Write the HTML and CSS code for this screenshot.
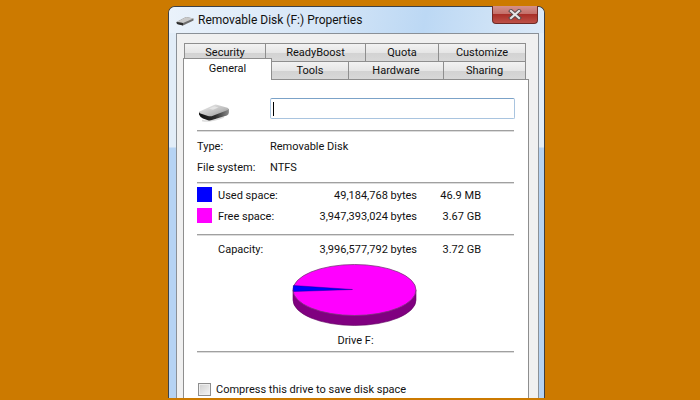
FILE: index.html
```html
<!DOCTYPE html>
<html>
<head>
  <title>Removable Disk (F:) Properties</title>
  <link rel="stylesheet" href="styles.css">
</head>
<body>
  <div class="window">
    <div class="titlebar">
      <svg class="title-icon" width="18" height="10" viewBox="0 0 18 10">
        <path d="M0.5 6 L10 1 L17.5 2.5 L17.5 4.5 L7 9.5 L1 8 Z" fill="#6e6e6e"/>
        <path d="M0.5 6 L10 1 L17.5 2.5 L7 7 Z" fill="#c9c9c9"/>
        <path d="M0.5 6 L7 7 L7 9.5 L1 8 Z" fill="#2c2c2c"/>
      </svg>
      <span class="title-text">Removable Disk (F:) Properties</span>
      <div class="close-btn">
        <svg width="14" height="11" viewBox="0 0 14 11">
          <path d="M3 2 L11 9 M11 2 L3 9" stroke="#5a4a4a" stroke-width="4" stroke-linecap="square"/>
          <path d="M3 2 L11 9 M11 2 L3 9" stroke="#e6e6e6" stroke-width="2.2" stroke-linecap="square"/>
        </svg>
      </div>
    </div>
    <div class="client">
      <div class="tabs">
        <div class="tab-row back">
          <div class="tab w-security">Security</div>
          <div class="tab w-ready">ReadyBoost</div>
          <div class="tab w-quota">Quota</div>
          <div class="tab w-custom">Customize</div>
        </div>
        <div class="tab-row front">
          <div class="tab selected">General</div>
          <div class="tab w-tools">Tools</div>
          <div class="tab w-hardware">Hardware</div>
          <div class="tab w-sharing">Sharing</div>
        </div>
      </div>
      <div class="panel">
        <div class="name-row">
          <svg class="drive-icon" width="32" height="20" viewBox="0 0 32 20">
            <defs>
              <linearGradient id="driveTop" x1="0" y1="0" x2="1" y2="1">
                <stop offset="0" stop-color="#f2f2f2"/>
                <stop offset="0.6" stop-color="#bdbdbd"/>
                <stop offset="1" stop-color="#8c8c8c"/>
              </linearGradient>
              <linearGradient id="driveFront" x1="0" y1="0" x2="1" y2="0">
                <stop offset="0" stop-color="#111"/>
                <stop offset="0.55" stop-color="#2e2e2e"/>
                <stop offset="1" stop-color="#8a8a8a"/>
              </linearGradient>
            </defs>
            <path d="M5 18.5 Q13 20.5 27 15" stroke="#dcdcdc" stroke-width="1.5" fill="none"/>
            <path d="M2 10 L2 12.5 Q3 15 6 16.5 L11 18.2 Q13 18.8 15 18 L30 13.5 Q32 12.5 32 10.5 L32 7 Z" fill="url(#driveFront)"/>
            <path d="M2.5 9.5 L17 3 Q18.5 2.3 20 2.8 L30.5 5.8 Q32.5 6.8 31 8 L16 13.8 Q13.5 14.8 11 14 L3.5 11.5 Q1.5 10.5 2.5 9.5 Z" fill="url(#driveTop)"/>
            <path d="M12 6.5 L17.5 4.3 L21.5 5.5 L16 7.8 Z" fill="#e4e4e4"/>
          </svg>
          <div class="name-input"><span class="caret"></span></div>
        </div>
        <div class="divider d1"></div>
        <div class="info-row r1"><span class="info-label">Type:</span><span>Removable Disk</span></div>
        <div class="info-row r2"><span class="info-label">File system:</span><span>NTFS</span></div>
        <div class="divider d2"></div>
        <div class="space-row">
          <span class="swatch used"></span><span>Used space:</span>
          <span class="num">49,184,768 bytes</span><span class="num">46.9 MB</span>
        </div>
        <div class="space-row">
          <span class="swatch free"></span><span>Free space:</span>
          <span class="num">3,947,393,024 bytes</span><span class="num">3.67 GB</span>
        </div>
        <div class="divider d3"></div>
        <div class="space-row s3">
          <span></span><span>Capacity:</span>
          <span class="num">3,996,577,792 bytes</span><span class="num">3.72 GB</span>
        </div>
        <svg class="pie" width="125" height="63" viewBox="0 0 125 63">
          <path d="M1 26 L1 36 A61.5 25.5 0 0 0 124 36 L124 26 Z" fill="#800080" stroke="#5e005e" stroke-width="0.6"/>
          <ellipse cx="62.5" cy="26" rx="61.5" ry="25.5" fill="#ff00ff" stroke="#7a3a7a" stroke-width="0.8"/>
          <path d="M60.5 25.5 L1.4 21.5 Q0.8 25 1.6 27.5 Z" fill="#0000ff" stroke="#000080" stroke-width="0.4"/>
        </svg>
        <div class="drive-label">Drive F:</div>
        <div class="divider d4"></div>
        <label class="compress"><span class="checkbox"></span>Compress this drive to save disk space</label>
      </div>
    </div>
  </div>
</body>
</html>
```

FILE: styles.css
```css
html, body {
  height: 100%;
}

body {
  margin: 0;
  background-color: #cc7a00;
  display: flex;
  align-items: flex-start;
  overflow: hidden;
  font-family: Roboto, sans-serif;
  font-size: 11px;
  color: #111;
}

.window {
  width: 377px;
  height: 392px;
  margin: 6px 0 0 168px;
  box-sizing: border-box;
  border: 1px solid #3c4148;
  border-bottom: 0;
  border-radius: 7px 7px 0 0;
  background: linear-gradient(to bottom, #e2edf8 0, #e2edf8 140px, #b6d3f3 141px);
  padding: 0 5px 0 7px;
  display: flex;
  flex-direction: column;
}

.titlebar {
  height: 26px;
  margin: 0 -5px 0 -7px;
  padding-left: 7px;
  box-sizing: border-box;
  border-radius: 6px 6px 0 0;
  background: linear-gradient(100deg, #eaf2fb 0%, #d6e6f7 40%, #bcd8f4 68%, #dceaf8 100%);
  display: flex;
  align-items: center;
  position: relative;
}

.title-icon {
  margin: 2px 4px 0 0;
}

.title-text {
  font-size: 12px;
  color: #111;
}

.close-btn {
  position: absolute;
  top: -1px;
  right: 6px;
  width: 46px;
  height: 18px;
  box-sizing: border-box;
  border: 1px solid #6e2a26;
  border-top: 0;
  border-radius: 0 0 4px 4px;
  background: linear-gradient(to bottom, #d4918a 0, #c4706a 45%, #a92f28 50%, #bd5148 100%);
  display: flex;
  justify-content: center;
  align-items: center;
}

.client {
  flex: 1;
  border: 1px solid #8a9097;
  border-bottom: 0;
  background-color: #f0f0f0;
  padding: 9px 10px 0 6px;
  display: flex;
  flex-direction: column;
}

.tab-row {
  display: flex;
  height: 18px;
}

.tab {
  box-sizing: border-box;
  height: 18px;
  line-height: 17px;
  border: 1px solid #8e8e8e;
  border-bottom: 0;
  margin-right: -1px;
  background: linear-gradient(to bottom, #f2f2f2 0, #e6e6e6 50%, #d2d2d2 51%, #d8d8d8 100%);
  text-align: center;
}

.back {
  margin-left: 1px;
}

.w-security { width: 82px; }
.w-ready { width: 101px; }
.w-quota { width: 74px; }
.w-custom { width: 88px; }
.w-tools { width: 78px; }
.w-hardware { width: 96px; }
.w-sharing { width: 83px; }

.front .selected {
  width: 89px;
  height: 22px;
  margin-top: -3px;
  line-height: 19px;
  background: #fff;
  position: relative;
  z-index: 1;
}

.panel {
  flex: 1;
  box-sizing: border-box;
  width: 346px;
  border: 1px solid #8e8e8e;
  border-bottom: 0;
  background-color: #fff;
  padding: 18px 13px 0 13px;
  display: flex;
  flex-direction: column;
}

.name-row {
  display: flex;
  align-items: center;
  height: 21px;
}

.drive-icon {
  margin-top: 6px;
}

.name-input {
  box-sizing: border-box;
  width: 246px;
  height: 21px;
  margin-left: 41px;
  border: 1px solid #a9c4df;
  border-top-color: #7ba2c8;
  border-radius: 2px;
  background: #fff;
  display: flex;
  align-items: center;
  padding-left: 2px;
}

.caret {
  width: 1px;
  height: 14px;
  background: #000;
}

.divider {
  height: 1px;
  background: #a0a0a0;
  border-bottom: 1px solid #dcdcdc;
  width: 317px;
}

.d1 { margin-top: 11px; }
.d2 { margin-top: 5px; }
.d3 { margin-top: 8px; }
.d4 { margin-top: 1px; }

.info-row {
  display: flex;
  box-sizing: border-box;
  height: 21px;
  padding-top: 2px;
  align-items: center;
}

.r1 { margin-top: 3px; }

.info-label {
  width: 73px;
}

.space-row {
  display: grid;
  grid-template-columns: 21px 60px 139px 64px;
  align-items: center;
  box-sizing: border-box;
  height: 21px;
  padding-top: 2px;
  white-space: nowrap;
}

.s3 { margin-top: 2px; }

.num {
  text-align: right;
}

.swatch {
  width: 15px;
  height: 15px;
  margin-top: -2px;
}

.used { background: #0000ff; }
.free { background: #ff00ff; }

.pie {
  margin: 5px 0 0 95px;
}

.drive-label {
  text-align: center;
  margin-top: 5px;
  width: 317px;
  height: 18px;
  line-height: 18px;
}

.compress {
  display: flex;
  align-items: center;
  margin-top: 30px;
}

.checkbox {
  box-sizing: border-box;
  width: 13px;
  height: 13px;
  margin: 0 5px 0 1px;
  border: 1px solid #8e8e8e;
  background: linear-gradient(135deg, #d0d0d0, #f4f4f4);
  box-shadow: inset 0 0 0 1px #eee;
}
```
